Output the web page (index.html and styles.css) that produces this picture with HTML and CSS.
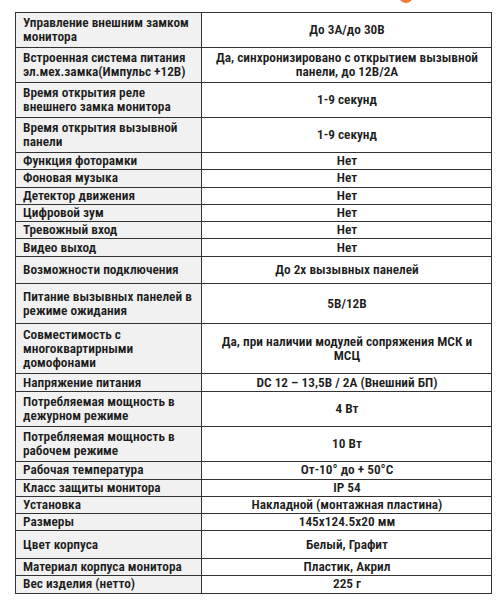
FILE: index.html
```html
<!DOCTYPE html>
<html lang="ru">
<head>
<meta charset="utf-8">
<title>Характеристики</title>
<link rel="stylesheet" href="styles.css">
</head>
<body>
<div class="page">
  <div class="logo-dot"></div>
  <table class="spec">
    <colgroup><col class="c-name"><col class="c-val"></colgroup>
    <tbody>
      <tr class="h35"><td class="name">Управление внешним замком монитора</td><td class="val">До 3А/до 30В</td></tr>
      <tr class="h35"><td class="name">Встроенная система питания эл.мех.замка(Импульс +12В)</td><td class="val">Да, синхронизировано с открытием вызывной панели, до 12В/2А</td></tr>
      <tr class="h35"><td class="name">Время открытия реле внешнего замка монитора</td><td class="val">1-9 секунд</td></tr>
      <tr class="h35"><td class="name">Время открытия вызывной панели</td><td class="val">1-9 секунд</td></tr>
      <tr class="h17"><td class="name">Функция фоторамки</td><td class="val">Нет</td></tr>
      <tr class="h17"><td class="name">Фоновая музыка</td><td class="val">Нет</td></tr>
      <tr class="h17"><td class="name">Детектор движения</td><td class="val">Нет</td></tr>
      <tr class="h17"><td class="name">Цифровой зум</td><td class="val">Нет</td></tr>
      <tr class="h17"><td class="name">Тревожный вход</td><td class="val">Нет</td></tr>
      <tr class="h17"><td class="name">Видео выход</td><td class="val">Нет</td></tr>
      <tr class="h27"><td class="name">Возможности подключения</td><td class="val">До 2х вызывных панелей</td></tr>
      <tr class="h39"><td class="name">Питание вызывных панелей в режиме ожидания</td><td class="val">5В/12В</td></tr>
      <tr class="h50"><td class="name">Совместимость с многоквартирными домофонами</td><td class="val">Да, при наличии модулей сопряжения МСК и МСЦ</td></tr>
      <tr class="h18"><td class="name">Напряжение питания</td><td class="val">DC 12 – 13,5В / 2А (Внешний БП)</td></tr>
      <tr class="h35"><td class="name">Потребляемая мощность в дежурном режиме</td><td class="val">4 Вт</td></tr>
      <tr class="h35"><td class="name">Потребляемая мощность в рабочем режиме</td><td class="val">10 Вт</td></tr>
      <tr class="h17"><td class="name">Рабочая температура</td><td class="val">От-10° до + 50°С</td></tr>
      <tr class="h17"><td class="name">Класс защиты монитора</td><td class="val">IP 54</td></tr>
      <tr class="h17"><td class="name">Установка</td><td class="val">Накладной (монтажная пластина)</td></tr>
      <tr class="h17"><td class="name">Размеры</td><td class="val">145x124.5x20 мм</td></tr>
      <tr class="h27"><td class="name">Цвет корпуса</td><td class="val">Белый, Графит</td></tr>
      <tr class="h17"><td class="name">Материал корпуса монитора</td><td class="val">Пластик, Акрил</td></tr>
      <tr class="h17"><td class="name">Вес изделия (нетто)</td><td class="val">225 г</td></tr>
    </tbody>
  </table>
</div>
</body>
</html>
```

FILE: styles.css
```css
html, body {
  margin: 0;
  padding: 0;
  background: #ffffff;
}

.page {
  position: relative;
  width: 503px;
  height: 600px;
  overflow: hidden;
  padding-top: 12px;
  box-sizing: border-box;
}

.logo-dot {
  position: absolute;
  left: 399px;
  top: -11px;
  width: 14px;
  height: 14px;
  border-radius: 50%;
  background: #f07a3a;
}

.spec {
  margin-left: 15px;
  width: 476px;
  border-collapse: collapse;
  table-layout: fixed;
  font-family: "Roboto Condensed", "Open Sans Condensed", Roboto, sans-serif;
  font-weight: 600;
  font-size: 13.3px;
  line-height: 14px;
  color: #1c1c1c;
}

.c-name { width: 186px; }
.c-val { width: 290px; }

.spec td {
  border: 1px solid #333333;
  padding: 0 6px 0 7px;
  vertical-align: middle;
}

.spec td.name {
  background: #f1f1f1;
  text-align: left;
}

.spec td.val {
  text-align: center;
}

.h17 { height: 17.3px; }
.h18 { height: 18px; }
.h27 { height: 27.5px; }
.h35 { height: 35px; }
.h39 { height: 40px; }
.h50 { height: 50px; }
```
